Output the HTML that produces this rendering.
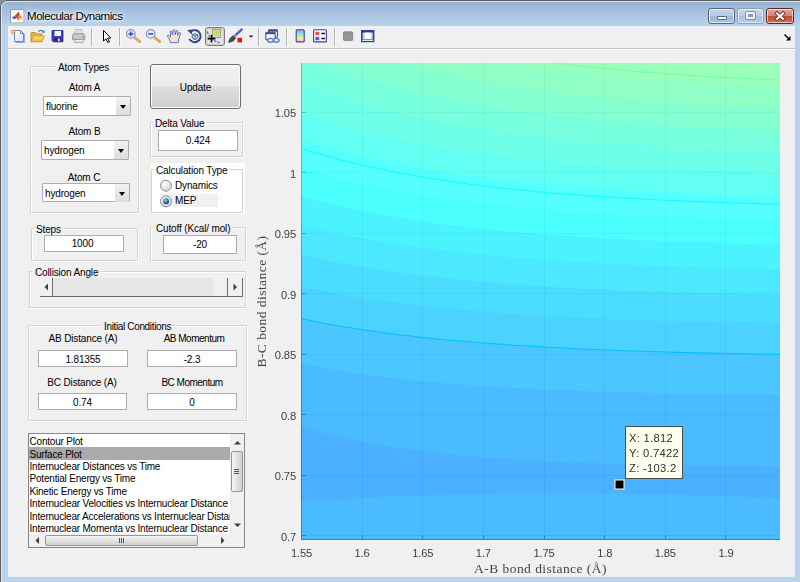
<!DOCTYPE html>
<html lang="en">
<head>
<meta charset="utf-8">
<title>Molecular Dynamics</title>
<style>
html,body{margin:0;padding:0}
body{width:800px;height:582px;overflow:hidden;position:relative;background:#8a8f96;font-family:"Liberation Sans",Arial,sans-serif;font-size:10px;color:#000;letter-spacing:-0.15px}
.abs{position:absolute}
#frame{left:0;top:0;width:800px;height:582px;box-sizing:border-box;border-radius:7px 0 0 0;
 background:linear-gradient(180deg,#98b4d4 0px,#98b4d4 2px,#a6c0de 12px,#b9d0ea 25px,#b9d1ea 26px,#b9d1ea 100%)}
#frameedge{left:0;top:0;width:806px;height:590px;border:1.3px solid #5f5f5f;border-radius:7px 0 0 0}
#frameedge2{left:1.3px;top:1.3px;width:806px;height:590px;border:1px solid rgba(235,242,250,.75);border-radius:6px 0 0 0}
#client{left:8px;top:26px;width:787px;height:551px;background:#f0f0f0}
#tbsep{left:8px;top:48px;width:787px;height:1px;background:#c4c4c4}
#tbsep2{left:8px;top:49px;width:787px;height:1px;background:#fafafa}
#title{left:27px;top:8px;font-size:11.5px;letter-spacing:-0.45px;line-height:16px;color:#000;white-space:nowrap;text-shadow:0 0 6px #fff,0 0 6px #fff,0 0 3px #fff}
.cap{top:8px;height:14px;border:1px solid #56687c;border-radius:3px;box-shadow:inset 0 0 0 1px rgba(255,255,255,.6)}
.panel{border:1px solid #d5d5d5;box-shadow:1px 1px 0 #fff, inset 1px 1px 0 #fff;box-sizing:border-box}
.ptitle{background:#f0f0f0;white-space:nowrap;line-height:12px;height:12px;padding:0 2px}
.lbl{white-space:nowrap;line-height:12px;height:12px;text-align:center}
.edit{background:#fff;border:1px solid #abadb3;box-sizing:border-box;text-align:center;line-height:12px;white-space:nowrap}
.combo{background:#fff;border:1px solid #abadb3;box-sizing:border-box;border-radius:1px}
.combo span{position:absolute;left:2px;top:4px;line-height:12px}
.combo i{position:absolute;right:0;top:0;width:14px;height:18px;background:linear-gradient(#f2f2f2,#ddd)}
.combo i:after{content:"";position:absolute;left:4px;top:8px;border:3.5px solid transparent;border-top:4px solid #000;border-bottom:none}
.li{left:0.5px;white-space:nowrap;line-height:12px;height:12px;font-size:10px;letter-spacing:-0.2px}
.tsep{top:29px;width:1px;height:17px;background:#b8b8b8;box-shadow:1px 0 0 #fff}
</style>
</head>
<body>
<div id="frame" class="abs"></div>
<div id="frameedge" class="abs"></div>
<div id="frameedge2" class="abs"></div>
<div id="client" class="abs"></div>
<div id="tbsep" class="abs"></div>
<div id="tbsep2" class="abs"></div>

<!-- title bar -->
<svg class="abs" style="left:9.5px;top:8.8px" width="14.5" height="14.5" viewBox="0 0 15 15">
 <rect x="0.5" y="0.5" width="14" height="14" rx="1.5" fill="#f4f6f8" stroke="#8e9aa8"/>
 <path d="M2,9 L5,7 L7,9 L4.5,10.5 Z" fill="#3a5fa8"/>
 <path d="M5,7 L9,2.5 L10,6 L7.5,11 L7,9 Z" fill="#c8502a"/>
 <path d="M9,2.5 C10.5,5 11.5,8 13,10.5 L10.5,9.5 L9,12 L7.5,11 L10,6 Z" fill="#e8923a"/>
</svg>
<div id="title" class="abs">Molecular Dynamics</div>
<div class="abs cap" style="left:708px;width:25px;background:linear-gradient(#c3d6ec 0%,#b4cbe6 48%,#9ab8db 52%,#a9c4e3 100%)"><div class="abs" style="left:8px;top:7px;width:8px;height:2px;background:#fff;border:1px solid #5c6b7b;border-radius:1px"></div></div>
<div class="abs cap" style="left:737px;width:25px;background:linear-gradient(#c6d8ec 0%,#b9cee6 48%,#a9c3df 52%,#b3cae4 100%);border-color:#8da0b6"><div class="abs" style="left:8px;top:3px;width:5px;height:3px;background:#8d9db4;border:2px solid #f2f2f2;box-shadow:0 0 0 0.7px #6b7784;border-radius:1px"></div></div>
<div class="abs cap" style="left:766px;width:26px;background:linear-gradient(#e3a99b 0%,#d6816e 48%,#c4452c 52%,#d2705a 100%);border-color:#5c2a25"><svg class="abs" style="left:6px;top:1px" width="14" height="12" viewBox="0 0 14 12"><path d="M4,3.4 L10,8.8 M10,3.4 L4,8.8" stroke="#5a3434" stroke-width="3.6" stroke-linecap="square"/><path d="M4,3.4 L10,8.8 M10,3.4 L4,8.8" stroke="#fff" stroke-width="2" stroke-linecap="square"/></svg></div>

<!-- toolbar icons -->
<svg class="abs" style="left:0;top:26px" width="800" height="22" viewBox="0 26 800 22">
<defs>
<linearGradient id="cbg" x1="0" y1="0" x2="0" y2="1"><stop offset="0" stop-color="#8f9fee"/><stop offset="0.3" stop-color="#8fd8f2"/><stop offset="0.55" stop-color="#b9efb0"/><stop offset="0.75" stop-color="#f6ee9a"/><stop offset="1" stop-color="#f5b0a0"/></linearGradient>
<linearGradient id="fold" x1="0" y1="0" x2="0" y2="1"><stop offset="0" stop-color="#fbe68c"/><stop offset="1" stop-color="#e6b73a"/></linearGradient>
<linearGradient id="pg" x1="0" y1="0" x2="1" y2="1"><stop offset="0" stop-color="#ffffff"/><stop offset="1" stop-color="#d4e2fa"/></linearGradient>
</defs>
<!-- new -->
<path d="M14.5,30.5 H20.5 L23.5,33.5 V41.5 H14.5 Z" fill="url(#pg)" stroke="#6f83c4"/>
<path d="M15.5,42.5 H24.5 V34" fill="none" stroke="#93a4d8"/>
<path d="M20.5,30.5 V33.5 H23.5" fill="none" stroke="#6f83c4"/>
<path d="M12.7,28.8 L13.6,30.6 L15.6,30 L14.6,31.7 L16,33 L14,33 L13.4,34.8 L12.4,33.2 L10.6,33.6 L11.6,32 L10.4,30.6 L12.2,30.6 Z" fill="#f08a3c"/>
<circle cx="13" cy="31.8" r="1.2" fill="#f9c29a"/>
<!-- open -->
<path d="M31,33.5 Q31,32.5 32,32.5 H35.5 L36.5,33.8 H41 Q42,33.8 42,34.8 V41.5 H31 Z" fill="#e2b540" stroke="#b98a1e" stroke-width="0.8"/>
<path d="M33.6,36 H44.4 L42,41.8 H30.8 Z" fill="url(#fold)" stroke="#c29a2c" stroke-width="0.8"/>
<path d="M38.5,31.5 Q41,29.3 43.3,31.6" fill="none" stroke="#4f78c4" stroke-width="1.3"/>
<path d="M41.8,32.8 L44.6,32.8 L44.6,30 Z" fill="#4f78c4"/>
<!-- save -->
<path d="M52,30.5 H63 V41.8 H53.2 L52,40.6 Z" fill="#3c3cb4" stroke="#2a2a8c" stroke-width="0.8"/>
<rect x="54.5" y="31" width="6.5" height="5" fill="#f2f4fb"/>
<rect x="54.8" y="38" width="5.8" height="3.6" fill="#20205a"/>
<rect x="57.8" y="38.6" width="2" height="2.6" fill="#e8e8f4"/>
<!-- print -->
<path d="M74.5,34 L75.5,29.5 H81.5 L82.8,34 Z" fill="#cfe6fb" stroke="#8fb0d6" stroke-width="0.7"/>
<path d="M72.5,35.5 Q72.5,33.8 74.5,33.8 H82.5 Q84.8,33.8 84.8,35.8 V39.5 H72.5 Z" fill="#c9c9c9" stroke="#8a8a8a" stroke-width="0.8"/>
<path d="M73.5,39.5 H84.5 L83,42.3 H75 Z" fill="#efefef" stroke="#909090" stroke-width="0.8"/>
<rect x="82.2" y="36.6" width="1.4" height="1.2" fill="#3db53d"/>
<!-- separators -->
<path d="M91.5,28 V46 M119.5,28 V46 M258.5,28 V46 M286.5,28 V46 M334.5,28 V46" stroke="#b4b4b4" stroke-width="1"/>
<path d="M92.5,28 V46 M120.5,28 V46 M259.5,28 V46 M287.5,28 V46 M335.5,28 V46" stroke="#fbfbfb" stroke-width="1"/>
<!-- pointer -->
<path d="M103.5,30.5 V41 L106,38.8 L107.8,42.6 L109.4,41.8 L107.6,38.2 L110.8,38 Z" fill="#fff" stroke="#000" stroke-width="1" stroke-linejoin="miter"/>
<!-- zoom in -->
<path d="M134,37 L139.6,41.6" stroke="#d9903a" stroke-width="2.6" stroke-linecap="round"/>
<path d="M134.2,37.2 L139.2,41.3" stroke="#f4c27a" stroke-width="1" stroke-linecap="round"/>
<circle cx="130.8" cy="33.9" r="4.3" fill="#e3e9fb" stroke="#8c8fd0" stroke-width="1.2"/>
<path d="M128.4,33.9 H133.2 M130.8,31.5 V36.3" stroke="#2a4ea8" stroke-width="1.5"/>
<!-- zoom out -->
<path d="M154,37 L159.6,41.6" stroke="#d9903a" stroke-width="2.6" stroke-linecap="round"/>
<path d="M154.2,37.2 L159.2,41.3" stroke="#f4c27a" stroke-width="1" stroke-linecap="round"/>
<circle cx="150.7" cy="33.9" r="4.3" fill="#e3e9fb" stroke="#8c8fd0" stroke-width="1.2"/>
<path d="M148.3,33.9 H153.1" stroke="#2a4ea8" stroke-width="1.5"/>
<!-- hand -->
<path d="M170.5,42.6 L169.2,39 L167.4,36.4 Q167.2,35 168.6,35.2 L170.6,37.2 L170.2,31.6 Q170.9,30.4 171.8,31.4 L172.6,35 L173,30.2 Q173.9,29 174.8,30.2 L175.2,34.8 L176.4,30.8 Q177.4,30 178,31.2 L177.6,35.4 L179.2,32.6 Q180.4,32 180.6,33.4 L179,38.4 L178.2,42.6 Z" fill="#fbe1c8" stroke="#4a68c8" stroke-width="0.9" stroke-linejoin="round"/>
<!-- rotate 3d -->
<path d="M191.2,31.2 A6,6 0 1 1 189.2,38.8" fill="none" stroke="#2c4680" stroke-width="1.9"/>
<path d="M187,30 L192.6,29.4 L191.8,34.4 Z" fill="#2c4680"/>
<path d="M192.2,34.8 L195,33.6 L197.8,34.8 V38.2 L195,39.6 L192.2,38.2 Z" fill="#dfe6f4" stroke="#2c4680" stroke-width="0.8"/>
<path d="M192.2,34.8 L195,36 L197.8,34.8 M195,36 V39.6" fill="none" stroke="#2c4680" stroke-width="0.7"/>
<!-- data cursor selected -->
<rect x="205.5" y="27.5" width="19" height="18" rx="2.5" fill="#e4e4e4" stroke="#7c7c7c"/>
<rect x="206.5" y="28.5" width="17" height="16" rx="1.5" fill="none" stroke="#c9c9c9"/>
<path d="M207.5,31.5 Q209,40.5 220.5,42.8" fill="none" stroke="#2828ff" stroke-width="1" stroke-dasharray="2.5,1.3"/>
<rect x="212.5" y="29.5" width="8" height="8" fill="#dcdc9a" stroke="#a8a85a"/>
<rect x="214" y="31" width="5" height="5" fill="#cfcf8c"/>
<path d="M207.6,38.6 H215.4 M211.5,34.8 V42.4" stroke="#000" stroke-width="1.6"/>
<!-- brush -->
<path d="M235.6,35.2 L241.6,29.6" stroke="#3a50d0" stroke-width="2.4" stroke-linecap="round"/>
<path d="M236.2,34.6 L241.2,30" stroke="#9fb0f4" stroke-width="0.8" stroke-dasharray="1.2,1"/>
<path d="M228.6,42.4 Q229.4,37.6 233.2,35.6 L235.6,37.8 Q234.4,41.8 228.6,42.4 Z" fill="#4a4a4a" stroke="#2a2a2a" stroke-width="0.6"/>
<path d="M233.2,35.6 L235,34.2 L236.8,36 L235.6,37.8 Z" fill="#9a9a9a"/>
<rect x="237.4" y="37.8" width="4.6" height="4.6" fill="#f01414"/>
<path d="M248.6,35.4 H253.4 L251,37.8 Z" fill="#222"/>
<!-- link -->
<rect x="268.5" y="29.7" width="9" height="7.5" rx="1" fill="#f4f7fc" stroke="#3c548c" stroke-width="1.1"/>
<rect x="268.5" y="29.7" width="9" height="2" fill="#3c548c"/>
<rect x="265.8" y="32.2" width="9.4" height="7.6" rx="1" fill="#f4f7fc" stroke="#3c548c" stroke-width="1.1"/>
<rect x="265.8" y="32.2" width="9.4" height="2" fill="#3c548c"/>
<ellipse cx="270.6" cy="40.3" rx="2.9" ry="2" fill="#e8eef8" stroke="#5478b4" stroke-width="1.3"/>
<ellipse cx="276.2" cy="40.3" rx="2.9" ry="2" fill="#e8eef8" stroke="#5478b4" stroke-width="1.3"/>
<path d="M271.8,40.3 H275" stroke="#7c9ccc" stroke-width="1.4"/>
<!-- colorbar -->
<rect x="296.2" y="29.7" width="8" height="12.2" rx="1" fill="url(#cbg)" stroke="#3a468c" stroke-width="1.1"/>
<!-- legend -->
<rect x="313.6" y="29.7" width="12.8" height="12.2" rx="1" fill="#f6f8fc" stroke="#3a468c" stroke-width="1.1"/>
<rect x="315.4" y="31.8" width="3.8" height="3.4" fill="#f04a4a"/>
<rect x="315.4" y="36.8" width="3.8" height="3.4" fill="#5a5af0"/>
<path d="M321.4,33.5 H325 M321.4,38.5 H325" stroke="#1a1a1a" stroke-width="1.4"/>
<!-- grey square -->
<rect x="343.5" y="31.8" width="9.2" height="8.8" rx="1.2" fill="#969696" stroke="#7e7e7e" stroke-width="0.8"/>
<!-- plot tools -->
<rect x="361" y="30" width="13.4" height="12.2" fill="#2c3f94"/>
<rect x="362.6" y="32.6" width="10.2" height="6.8" fill="#c4d4f0"/>
<rect x="364.8" y="32.6" width="6" height="6.2" fill="#ffffff"/>
<rect x="362.2" y="39.8" width="11" height="1.2" fill="#ece9c8"/>
<!-- corner arrow -->
<path d="M784.5,34.5 L789.5,39.5" stroke="#000" stroke-width="1.4"/>
<path d="M786,40.5 H790.5 V36 Z" fill="#000"/>
</svg>


<!-- Atom Types panel -->
<div class="abs panel" style="left:30px;top:66px;width:109px;height:147px"></div>
<div class="abs ptitle" style="left:56px;top:62px">Atom Types</div>
<div class="abs lbl" style="left:44px;top:82px;width:81px">Atom A</div>
<div class="abs combo" style="left:43px;top:96px;width:88px;height:20px"><span>fluorine</span><i></i></div>
<div class="abs lbl" style="left:44px;top:126px;width:81px">Atom B</div>
<div class="abs combo" style="left:41px;top:140px;width:88px;height:20px"><span>hydrogen</span><i></i></div>
<div class="abs lbl" style="left:44px;top:172px;width:80px">Atom C</div>
<div class="abs combo" style="left:42px;top:183px;width:88px;height:19px"><span>hydrogen</span><i></i></div>

<!-- Update button -->
<div class="abs" style="left:150px;top:64px;width:91px;height:45px;box-sizing:border-box;border:1px solid #707070;border-radius:3px;background:linear-gradient(#f2f2f2 0%,#ebebeb 48%,#dddddd 52%,#cfcfcf 100%);box-shadow:inset 0 0 0 1px #fcfcfc;text-align:center;line-height:45px">Update</div>

<!-- Delta Value -->
<div class="abs panel" style="left:150px;top:122px;width:93px;height:35px"></div>
<div class="abs ptitle" style="left:153px;top:118px">Delta Value</div>
<div class="abs edit" style="left:158px;top:130px;width:80px;height:21px;padding-top:4px">0.424</div>

<!-- Calculation Type -->
<div class="abs" style="left:151px;top:163px;width:93.5px;height:50.5px;background:#fff"></div>
<div class="abs panel" style="left:151px;top:169px;width:92px;height:44px"></div>
<div class="abs ptitle" style="left:154px;top:165px;background:#fff">Calculation Type</div>
<div class="abs" style="left:160px;top:194px;width:58px;height:13px;background:#f0f0f0"></div>
<svg class="abs" style="left:159px;top:179px" width="14" height="30" viewBox="0 0 14 30">
 <defs><radialGradient id="rg1" cx="0.4" cy="0.35" r="0.7"><stop offset="0" stop-color="#fdfdfd"/><stop offset="1" stop-color="#cfcfcf"/></radialGradient>
 <radialGradient id="rg2" cx="0.4" cy="0.35" r="0.7"><stop offset="0" stop-color="#8fd6f5"/><stop offset="0.6" stop-color="#1d6fa8"/><stop offset="1" stop-color="#0c3d6b"/></radialGradient></defs>
 <circle cx="7" cy="6.7" r="5.5" fill="url(#rg1)" stroke="#8e8f8f"/>
 <circle cx="7" cy="22.3" r="5.5" fill="url(#rg1)" stroke="#8e8f8f"/>
 <circle cx="7" cy="22.3" r="3" fill="url(#rg2)"/>
</svg>
<div class="abs lbl" style="left:175px;top:180px;text-align:left">Dynamics</div>
<div class="abs lbl" style="left:175px;top:195px;text-align:left">MEP</div>

<!-- Steps -->
<div class="abs panel" style="left:31px;top:228px;width:107px;height:33px"></div>
<div class="abs ptitle" style="left:34px;top:224px">Steps</div>
<div class="abs edit" style="left:44px;top:235px;width:80px;height:17px;padding-top:2px;padding-right:3px">1000</div>

<!-- Cutoff -->
<div class="abs panel" style="left:150px;top:227px;width:96px;height:34px"></div>
<div class="abs ptitle" style="left:154px;top:223px">Cutoff (Kcal/ mol)</div>
<div class="abs edit" style="left:163px;top:235px;width:74px;height:19px;padding-top:3px">-20</div>

<!-- Collision Angle -->
<div class="abs panel" style="left:29px;top:271px;width:217px;height:37px"></div>
<div class="abs ptitle" style="left:33px;top:267px">Collision Angle</div>
<div class="abs" style="left:40px;top:278px;width:203px;height:18px;background:#e6e6e6;border-bottom:1.5px solid #6a6a6a;box-sizing:content-box"></div>
<div class="abs" style="left:40px;top:278px;width:12px;height:18px;background:#f0f0f0;border-right:1px solid #6d6d6d"></div>
<div class="abs" style="left:213px;top:278px;width:14px;height:18px;background:#f0f0f0;border-right:1px solid #6d6d6d"></div>
<div class="abs" style="left:228px;top:278px;width:14px;height:18px;background:#f0f0f0;border-right:1px solid #6d6d6d"></div>
<svg class="abs" style="left:40px;top:278px" width="204" height="18" viewBox="0 0 204 18"><path d="M8,5.5 L8,12.5 L4.5,9 Z M193.5,5.5 L193.5,12.5 L197,9 Z" fill="#404040"/></svg>

<!-- Initial Conditions -->
<div class="abs panel" style="left:28px;top:325px;width:219px;height:96px"></div>
<div class="abs ptitle" style="left:102px;top:321px;letter-spacing:-0.35px">Initial Conditions</div>
<div class="abs lbl" style="left:38px;top:333px;width:90px">AB Distance (A)</div>
<div class="abs lbl" style="left:149px;top:333px;width:90px;letter-spacing:-0.5px">AB Momentum</div>
<div class="abs edit" style="left:38px;top:350px;width:90px;height:17px;padding-top:3px">1.81355</div>
<div class="abs edit" style="left:147px;top:350px;width:90px;height:17px;padding-top:3px">-2.3</div>
<div class="abs lbl" style="left:37px;top:377px;width:90px">BC Distance (A)</div>
<div class="abs lbl" style="left:147px;top:377px;width:90px;letter-spacing:-0.5px">BC Momentum</div>
<div class="abs edit" style="left:38px;top:393px;width:89px;height:17px;padding-top:3px">0.74</div>
<div class="abs edit" style="left:147px;top:393px;width:90px;height:17px;padding-top:3px">0</div>

<!-- Listbox -->
<div class="abs" style="left:28px;top:433px;width:217px;height:115px;box-sizing:border-box;border:1px solid #828790;background:#fff;overflow:hidden">
 <div class="abs" style="left:0;top:13px;width:201px;height:12.5px;background:#aaaaaa"></div>
 <div class="abs" style="left:0;top:0;width:201px;height:100px;overflow:hidden">
 <div class="abs li" style="top:2px">Contour Plot</div>
 <div class="abs li" style="top:15px">Surface Plot</div>
 <div class="abs li" style="top:27px">Internuclear Distances vs Time</div>
 <div class="abs li" style="top:39px">Potential Energy vs Time</div>
 <div class="abs li" style="top:52px">Kinetic Energy vs Time</div>
 <div class="abs li" style="top:64px">Internuclear Velocities vs Internuclear Distance</div>
 <div class="abs li" style="top:77px">Internuclear Accelerations vs Internuclear Distance</div>
 <div class="abs li" style="top:89px">Internuclear Momenta vs Internuclear Distance</div>
 </div>
 <div class="abs" style="left:201px;top:0;width:14px;height:100px;background:#f0f0f0"></div>
 <div class="abs" style="left:0;top:100px;width:215px;height:13px;background:#f0f0f0"></div>
 <div class="abs" style="left:201.5px;top:17px;width:12px;height:41px;border:1px solid #979797;border-radius:2px;box-sizing:border-box;background:linear-gradient(90deg,#f5f5f5,#e2e2e2 50%,#cfcfcf)"></div>
 <div class="abs" style="left:16px;top:101px;width:153px;height:11px;border:1px solid #979797;border-radius:2px;box-sizing:border-box;background:linear-gradient(#f5f5f5,#e2e2e2 50%,#cfcfcf)"></div>
 <svg class="abs" style="left:0;top:0" width="215" height="113" viewBox="0 0 215 113"><path d="M205,10.5 L212,10.5 L208.5,7 Z M205,89.5 L212,89.5 L208.5,93 Z M10,103 L10,110 L6.5,106.5 Z M192,103 L192,110 L195.5,106.5 Z" fill="#404040"/><path d="M205,35.5 h5 M205,37.5 h5 M205,39.5 h5 M90.5,104 v5 M92.5,104 v5 M94.5,104 v5" stroke="#555" stroke-width="1"/></svg>
</div>

<svg id="plot" width="800" height="582" viewBox="0 0 800 582" style="position:absolute;left:0;top:0;will-change:transform">
<defs><clipPath id="cp"><rect x="301" y="63" width="479" height="477"/></clipPath></defs>
<rect x="301" y="63" width="479" height="477" fill="#fff"/>
<path d="M362.5,63 V540 M422.5,63 V540 M483.5,63 V540 M544.5,63 V540 M604.5,63 V540 M665.5,63 V540 M725.5,63 V540 M301,535.5 H780 M301,475.5 H780 M301,414.5 H780 M301,354.5 H780 M301,293.5 H780 M301,233.5 H780 M301,172.5 H780 M301,112.5 H780" stroke="#e1e1e1" stroke-width="1" fill="none" shape-rendering="crispEdges"/>
<path d="M301.5,63 V539.5 H780 M362.5,540 v-5 M422.5,540 v-5 M483.5,540 v-5 M544.5,540 v-5 M604.5,540 v-5 M665.5,540 v-5 M725.5,540 v-5 M301,535.5 h5 M301,475.5 h5 M301,414.5 h5 M301,354.5 h5 M301,293.5 h5 M301,233.5 h5 M301,172.5 h5 M301,112.5 h5" stroke="#5c5c5c" stroke-width="1" fill="none" shape-rendering="crispEdges"/>
<g opacity="0.7" clip-path="url(#cp)">
<rect x="301" y="63" width="479" height="477" fill="#80ff8f"/>
<path d="M301.0,58.0 L313.0,58.0 L324.9,58.0 L336.9,58.0 L348.9,58.0 L360.9,58.0 L372.9,58.0 L384.8,58.0 L396.8,58.0 L408.8,58.0 L420.8,58.0 L432.7,58.0 L444.7,58.0 L456.7,58.0 L468.6,58.0 L480.6,58.0 L492.6,58.0 L504.6,58.0 L516.5,58.0 L528.5,58.0 L540.5,58.0 L552.5,58.0 L564.5,58.0 L576.4,58.0 L588.4,58.0 L600.4,58.0 L612.3,58.0 L624.3,58.0 L636.3,58.0 L648.3,58.0 L660.2,58.2 L672.2,59.2 L684.2,60.1 L696.2,60.9 L708.1,61.7 L720.1,62.4 L732.1,63.1 L744.1,63.8 L756.0,64.4 L768.0,65.0 L780.0,65.5 L780.0,540.0 L301.0,540.0 Z" fill="#70ff9f"/>
<path d="M301.0,58.0 L313.0,58.0 L324.9,58.0 L336.9,58.0 L348.9,58.0 L360.9,58.0 L372.9,58.0 L384.8,58.0 L396.8,58.0 L408.8,58.0 L420.8,58.0 L432.7,58.0 L444.7,58.0 L456.7,58.0 L468.6,58.0 L480.6,58.0 L492.6,59.5 L504.6,61.6 L516.5,63.6 L528.5,65.5 L540.5,67.3 L552.5,68.9 L564.5,70.5 L576.4,71.9 L588.4,73.3 L600.4,74.6 L612.3,75.8 L624.3,76.9 L636.3,78.0 L648.3,79.0 L660.2,79.9 L672.2,80.8 L684.2,81.6 L696.2,82.4 L708.1,83.1 L720.1,83.8 L732.1,84.4 L744.1,85.0 L756.0,85.6 L768.0,86.1 L780.0,86.6 L780.0,540.0 L301.0,540.0 Z" fill="#60ffaf"/>
<path d="M301.0,58.0 L313.0,58.0 L324.9,58.0 L336.9,58.0 L348.9,58.0 L360.9,58.0 L372.9,58.0 L384.8,59.0 L396.8,62.5 L408.8,65.8 L420.8,68.9 L432.7,71.8 L444.7,74.5 L456.7,77.1 L468.6,79.5 L480.6,81.8 L492.6,83.9 L504.6,85.9 L516.5,87.7 L528.5,89.5 L540.5,91.1 L552.5,92.7 L564.5,94.1 L576.4,95.5 L588.4,96.8 L600.4,98.0 L612.3,99.1 L624.3,100.2 L636.3,101.1 L648.3,102.1 L660.2,102.9 L672.2,103.8 L684.2,104.5 L696.2,105.3 L708.1,105.9 L720.1,106.6 L732.1,107.2 L744.1,107.7 L756.0,108.2 L768.0,108.7 L780.0,109.2 L780.0,540.0 L301.0,540.0 Z" fill="#50ffbf"/>
<path d="M301.0,58.0 L313.0,60.2 L324.9,65.0 L336.9,69.4 L348.9,73.6 L360.9,77.5 L372.9,81.1 L384.8,84.6 L396.8,87.8 L408.8,90.8 L420.8,93.7 L432.7,96.3 L444.7,98.8 L456.7,101.2 L468.6,103.4 L480.6,105.5 L492.6,107.4 L504.6,109.2 L516.5,110.9 L528.5,112.6 L540.5,114.1 L552.5,115.5 L564.5,116.8 L576.4,118.0 L588.4,119.2 L600.4,120.3 L612.3,121.3 L624.3,122.3 L636.3,123.2 L648.3,124.1 L660.2,124.9 L672.2,125.6 L684.2,126.3 L696.2,127.0 L708.1,127.6 L720.1,128.2 L732.1,128.7 L744.1,129.2 L756.0,129.7 L768.0,130.2 L780.0,130.6 L780.0,540.0 L301.0,540.0 Z" fill="#40ffcf"/>
<path d="M301.0,83.2 L313.0,87.8 L324.9,92.1 L336.9,96.2 L348.9,99.9 L360.9,103.5 L372.9,106.9 L384.8,110.0 L396.8,112.9 L408.8,115.7 L420.8,118.3 L432.7,120.7 L444.7,123.0 L456.7,125.2 L468.6,127.2 L480.6,129.1 L492.6,130.8 L504.6,132.5 L516.5,134.1 L528.5,135.5 L540.5,136.9 L552.5,138.2 L564.5,139.4 L576.4,140.5 L588.4,141.6 L600.4,142.6 L612.3,143.6 L624.3,144.4 L636.3,145.3 L648.3,146.0 L660.2,146.8 L672.2,147.5 L684.2,148.1 L696.2,148.7 L708.1,149.3 L720.1,149.8 L732.1,150.3 L744.1,150.8 L756.0,151.2 L768.0,151.6 L780.0,152.0 L780.0,540.0 L301.0,540.0 Z" fill="#30ffdf"/>
<path d="M301.0,112.7 L313.0,116.9 L324.9,120.8 L336.9,124.4 L348.9,127.8 L360.9,131.0 L372.9,134.0 L384.8,136.8 L396.8,139.4 L408.8,141.9 L420.8,144.2 L432.7,146.3 L444.7,148.4 L456.7,150.3 L468.6,152.0 L480.6,153.7 L492.6,155.2 L504.6,156.7 L516.5,158.0 L528.5,159.3 L540.5,160.5 L552.5,161.6 L564.5,162.7 L576.4,163.6 L588.4,164.5 L600.4,165.4 L612.3,166.2 L624.3,167.0 L636.3,167.7 L648.3,168.3 L660.2,168.9 L672.2,169.5 L684.2,170.1 L696.2,170.6 L708.1,171.0 L720.1,171.5 L732.1,171.9 L744.1,172.3 L756.0,172.6 L768.0,173.0 L780.0,173.3 L780.0,540.0 L301.0,540.0 Z" fill="#20ffef"/>
<path d="M301.0,139.4 L313.0,143.2 L324.9,146.8 L336.9,150.1 L348.9,153.3 L360.9,156.2 L372.9,159.0 L384.8,161.6 L396.8,164.0 L408.8,166.3 L420.8,168.4 L432.7,170.4 L444.7,172.3 L456.7,174.1 L468.6,175.8 L480.6,177.3 L492.6,178.8 L504.6,180.2 L516.5,181.5 L528.5,182.7 L540.5,183.8 L552.5,184.9 L564.5,185.9 L576.4,186.8 L588.4,187.7 L600.4,188.5 L612.3,189.3 L624.3,190.0 L636.3,190.7 L648.3,191.4 L660.2,192.0 L672.2,192.5 L684.2,193.1 L696.2,193.6 L708.1,194.0 L720.1,194.5 L732.1,194.9 L744.1,195.3 L756.0,195.6 L768.0,196.0 L780.0,196.3 L780.0,540.0 L301.0,540.0 Z" fill="#10ffff"/>
<path d="M301.0,167.7 L313.0,171.2 L324.9,174.6 L336.9,177.7 L348.9,180.6 L360.9,183.4 L372.9,185.9 L384.8,188.3 L396.8,190.6 L408.8,192.7 L420.8,194.7 L432.7,196.5 L444.7,198.3 L456.7,199.9 L468.6,201.4 L480.6,202.9 L492.6,204.2 L504.6,205.5 L516.5,206.7 L528.5,207.8 L540.5,208.8 L552.5,209.8 L564.5,210.7 L576.4,211.6 L588.4,212.4 L600.4,213.1 L612.3,213.8 L624.3,214.5 L636.3,215.1 L648.3,215.7 L660.2,216.2 L672.2,216.7 L684.2,217.2 L696.2,217.7 L708.1,218.1 L720.1,218.5 L732.1,218.8 L744.1,219.2 L756.0,219.5 L768.0,219.8 L780.0,220.1 L780.0,540.0 L301.0,540.0 Z" fill="#00ffff"/>
<path d="M301.0,196.3 L313.0,199.6 L324.9,202.6 L336.9,205.5 L348.9,208.2 L360.9,210.7 L372.9,213.1 L384.8,215.3 L396.8,217.4 L408.8,219.3 L420.8,221.1 L432.7,222.8 L444.7,224.4 L456.7,225.9 L468.6,227.3 L480.6,228.7 L492.6,229.9 L504.6,231.1 L516.5,232.1 L528.5,233.2 L540.5,234.1 L552.5,235.0 L564.5,235.9 L576.4,236.6 L588.4,237.4 L600.4,238.1 L612.3,238.7 L624.3,239.3 L636.3,239.9 L648.3,240.4 L660.2,240.9 L672.2,241.4 L684.2,241.8 L696.2,242.3 L708.1,242.6 L720.1,243.0 L732.1,243.3 L744.1,243.7 L756.0,244.0 L768.0,244.2 L780.0,244.5 L780.0,540.0 L301.0,540.0 Z" fill="#00efff"/>
<path d="M301.0,225.1 L313.0,228.1 L324.9,230.9 L336.9,233.5 L348.9,235.9 L360.9,238.2 L372.9,240.4 L384.8,242.4 L396.8,244.3 L408.8,246.1 L420.8,247.8 L432.7,249.3 L444.7,250.8 L456.7,252.2 L468.6,253.4 L480.6,254.6 L492.6,255.8 L504.6,256.8 L516.5,257.8 L528.5,258.8 L540.5,259.6 L552.5,260.4 L564.5,261.2 L576.4,261.9 L588.4,262.6 L600.4,263.2 L612.3,263.8 L624.3,264.4 L636.3,264.9 L648.3,265.4 L660.2,265.8 L672.2,266.3 L684.2,266.7 L696.2,267.0 L708.1,267.4 L720.1,267.7 L732.1,268.0 L744.1,268.3 L756.0,268.6 L768.0,268.9 L780.0,269.1 L780.0,540.0 L301.0,540.0 Z" fill="#00dfff"/>
<path d="M301.0,254.5 L313.0,257.2 L324.9,259.8 L336.9,262.2 L348.9,264.4 L360.9,266.5 L372.9,268.5 L384.8,270.4 L396.8,272.1 L408.8,273.7 L420.8,275.3 L432.7,276.7 L444.7,278.0 L456.7,279.3 L468.6,280.5 L480.6,281.6 L492.6,282.6 L504.6,283.6 L516.5,284.5 L528.5,285.3 L540.5,286.1 L552.5,286.9 L564.5,287.6 L576.4,288.2 L588.4,288.8 L600.4,289.4 L612.3,290.0 L624.3,290.5 L636.3,291.0 L648.3,291.4 L660.2,291.8 L672.2,292.2 L684.2,292.6 L696.2,292.9 L708.1,293.2 L720.1,293.5 L732.1,293.8 L744.1,294.1 L756.0,294.3 L768.0,294.6 L780.0,294.8 L780.0,540.0 L301.0,540.0 Z" fill="#00cfff"/>
<path d="M301.0,286.6 L313.0,289.1 L324.9,291.5 L336.9,293.7 L348.9,295.7 L360.9,297.7 L372.9,299.5 L384.8,301.2 L396.8,302.8 L408.8,304.3 L420.8,305.7 L432.7,307.0 L444.7,308.2 L456.7,309.3 L468.6,310.4 L480.6,311.4 L492.6,312.4 L504.6,313.3 L516.5,314.1 L528.5,314.9 L540.5,315.6 L552.5,316.3 L564.5,317.0 L576.4,317.6 L588.4,318.1 L600.4,318.7 L612.3,319.2 L624.3,319.6 L636.3,320.1 L648.3,320.5 L660.2,320.9 L672.2,321.2 L684.2,321.6 L696.2,321.9 L708.1,322.2 L720.1,322.5 L732.1,322.7 L744.1,323.0 L756.0,323.2 L768.0,323.4 L780.0,323.6 L780.0,540.0 L301.0,540.0 Z" fill="#00bfff"/>
<path d="M301.0,318.6 L313.0,321.1 L324.9,323.4 L336.9,325.5 L348.9,327.5 L360.9,329.4 L372.9,331.2 L384.8,332.8 L396.8,334.4 L408.8,335.8 L420.8,337.2 L432.7,338.5 L444.7,339.7 L456.7,340.8 L468.6,341.8 L480.6,342.8 L492.6,343.7 L504.6,344.6 L516.5,345.4 L528.5,346.1 L540.5,346.8 L552.5,347.5 L564.5,348.1 L576.4,348.7 L588.4,349.2 L600.4,349.7 L612.3,350.2 L624.3,350.7 L636.3,351.1 L648.3,351.5 L660.2,351.8 L672.2,352.2 L684.2,352.5 L696.2,352.8 L708.1,353.1 L720.1,353.3 L732.1,353.6 L744.1,353.8 L756.0,354.0 L768.0,354.2 L780.0,354.4 L780.0,540.0 L301.0,540.0 Z" fill="#00afff"/>
<path d="M301.0,363.3 L313.0,365.7 L324.9,368.0 L336.9,370.1 L348.9,372.1 L360.9,373.9 L372.9,375.5 L384.8,377.1 L396.8,378.5 L408.8,379.8 L420.8,381.0 L432.7,382.2 L444.7,383.2 L456.7,384.2 L468.6,385.1 L480.6,385.9 L492.6,386.7 L504.6,387.4 L516.5,388.1 L528.5,388.7 L540.5,389.3 L552.5,389.8 L564.5,390.3 L576.4,390.8 L588.4,391.2 L600.4,391.6 L612.3,391.9 L624.3,392.3 L636.3,392.6 L648.3,392.9 L660.2,393.1 L672.2,393.4 L684.2,393.6 L696.2,393.8 L708.1,394.0 L720.1,394.2 L732.1,394.3 L744.1,394.5 L756.0,394.6 L768.0,394.8 L780.0,394.9 L780.0,540.0 L301.0,540.0 Z" fill="#009fff"/>
<path d="M301.0,426.3 L313.0,429.9 L324.9,433.2 L336.9,436.2 L348.9,438.9 L360.9,441.4 L372.9,443.7 L384.8,445.8 L396.8,447.7 L408.8,449.4 L420.8,451.0 L432.7,452.4 L444.7,453.7 L456.7,454.9 L468.6,456.0 L480.6,457.0 L492.6,458.0 L504.6,458.8 L516.5,459.6 L528.5,460.3 L540.5,460.9 L552.5,461.5 L564.5,462.0 L576.4,462.5 L588.4,462.9 L600.4,463.3 L612.3,463.7 L624.3,464.0 L636.3,464.4 L648.3,464.6 L660.2,464.9 L672.2,465.1 L684.2,465.3 L696.2,465.5 L708.1,465.7 L720.1,465.9 L732.1,466.0 L744.1,466.2 L756.0,466.3 L768.0,466.4 L780.0,466.5 L780.0,540.0 L301.0,540.0 Z" fill="#008fff"/>
<path d="M301.0,501.3 L321.0,500.0 L340.9,498.9 L360.9,497.9 L380.8,497.0 L400.8,496.2 L420.8,495.5 L440.7,494.9 L460.7,494.3 L480.6,493.9 L500.6,493.6 L520.5,493.4 L540.5,493.3 L560.5,493.2 L580.4,493.3 L600.4,493.4 L620.3,493.6 L640.3,494.0 L660.2,494.4 L680.2,494.8 L700.2,495.4 L720.1,496.0 L740.1,496.8 L760.0,497.5 L780.0,498.4 L780.0,540.0 L301.0,540.0 Z" fill="#009fff"/>
</g>
<g clip-path="url(#cp)" fill="none" stroke-width="1.05">
<path d="M301.0,318.6 L313.0,321.1 L324.9,323.4 L336.9,325.5 L348.9,327.5 L360.9,329.4 L372.9,331.2 L384.8,332.8 L396.8,334.4 L408.8,335.8 L420.8,337.2 L432.7,338.5 L444.7,339.7 L456.7,340.8 L468.6,341.8 L480.6,342.8 L492.6,343.7 L504.6,344.6 L516.5,345.4 L528.5,346.1 L540.5,346.8 L552.5,347.5 L564.5,348.1 L576.4,348.7 L588.4,349.2 L600.4,349.7 L612.3,350.2 L624.3,350.7 L636.3,351.1 L648.3,351.5 L660.2,351.8 L672.2,352.2 L684.2,352.5 L696.2,352.8 L708.1,353.1 L720.1,353.3 L732.1,353.6 L744.1,353.8 L756.0,354.0 L768.0,354.2 L780.0,354.4" stroke="#00bfff"/>
<path d="M301.0,148.5 L313.0,152.1 L324.9,155.6 L336.9,158.9 L348.9,161.9 L360.9,164.8 L372.9,167.5 L384.8,170.0 L396.8,172.4 L408.8,174.6 L420.8,176.7 L432.7,178.7 L444.7,180.6 L456.7,182.3 L468.6,183.9 L480.6,185.5 L492.6,186.9 L504.6,188.3 L516.5,189.6 L528.5,190.7 L540.5,191.9 L552.5,192.9 L564.5,193.9 L576.4,194.9 L588.4,195.7 L600.4,196.6 L612.3,197.3 L624.3,198.0 L636.3,198.7 L648.3,199.4 L660.2,200.0 L672.2,200.5 L684.2,201.1 L696.2,201.6 L708.1,202.0 L720.1,202.5 L732.1,202.9 L744.1,203.3 L756.0,203.6 L768.0,204.0 L780.0,204.3" stroke="#10ffff"/>
<path d="M301.0,-7.7 L313.0,-1.8 L324.9,3.6 L336.9,8.8 L348.9,13.6 L360.9,18.2 L372.9,22.4 L384.8,26.4 L396.8,30.2 L408.8,33.7 L420.8,37.0 L432.7,40.1 L444.7,43.0 L456.7,45.8 L468.6,48.3 L480.6,50.8 L492.6,53.0 L504.6,55.1 L516.5,57.1 L528.5,59.0 L540.5,60.7 L552.5,62.4 L564.5,63.9 L576.4,65.4 L588.4,66.7 L600.4,68.0 L612.3,69.2 L624.3,70.3 L636.3,71.4 L648.3,72.4 L660.2,73.3 L672.2,74.2 L684.2,75.0 L696.2,75.8 L708.1,76.5 L720.1,77.2 L732.1,77.8 L744.1,78.4 L756.0,79.0 L768.0,79.5 L780.0,80.0" stroke="#70ff9f"/>
</g>
<rect x="625.5" y="426.5" width="57" height="52" fill="#ffffee" stroke="#4d4d4d" stroke-width="1"/>
<rect x="615" y="480" width="9" height="9" fill="#000" stroke="#ffffe0" stroke-width="1"/>
<g font-family="Liberation Sans, Arial, sans-serif" font-size="11.2" letter-spacing="0.3" fill="#303030"><text x="629" y="442">X: 1.812</text><text x="629" y="457">Y: 0.7422</text><text x="629" y="472">Z: -103.2</text></g>
<g font-family="Liberation Sans, Arial, sans-serif" font-size="11.2" fill="#404040">
<text x="301.5" y="557.2" text-anchor="middle">1.55</text>
<text x="362.1" y="557.2" text-anchor="middle">1.6</text>
<text x="422.8" y="557.2" text-anchor="middle">1.65</text>
<text x="483.4" y="557.2" text-anchor="middle">1.7</text>
<text x="544.1" y="557.2" text-anchor="middle">1.75</text>
<text x="604.7" y="557.2" text-anchor="middle">1.8</text>
<text x="665.3" y="557.2" text-anchor="middle">1.85</text>
<text x="726.0" y="557.2" text-anchor="middle">1.9</text>
<text x="296" y="540.8" text-anchor="end">0.7</text>
<text x="296" y="480.3" text-anchor="end">0.75</text>
<text x="296" y="419.8" text-anchor="end">0.8</text>
<text x="296" y="359.3" text-anchor="end">0.85</text>
<text x="296" y="298.8" text-anchor="end">0.9</text>
<text x="296" y="238.3" text-anchor="end">0.95</text>
<text x="296" y="177.8" text-anchor="end">1</text>
<text x="296" y="117.3" text-anchor="end">1.05</text>
</g>
<text x="540.5" y="573.4" text-anchor="middle" font-family="Liberation Serif, serif" font-size="13.5" letter-spacing="0.45" fill="#444">A-B bond distance (Å)</text>
<text transform="translate(265.8,301.5) rotate(-90)" text-anchor="middle" font-family="Liberation Serif, serif" font-size="13.5" letter-spacing="0.45" fill="#444">B-C bond distance (Å)</text>
</svg>
</body>
</html>
